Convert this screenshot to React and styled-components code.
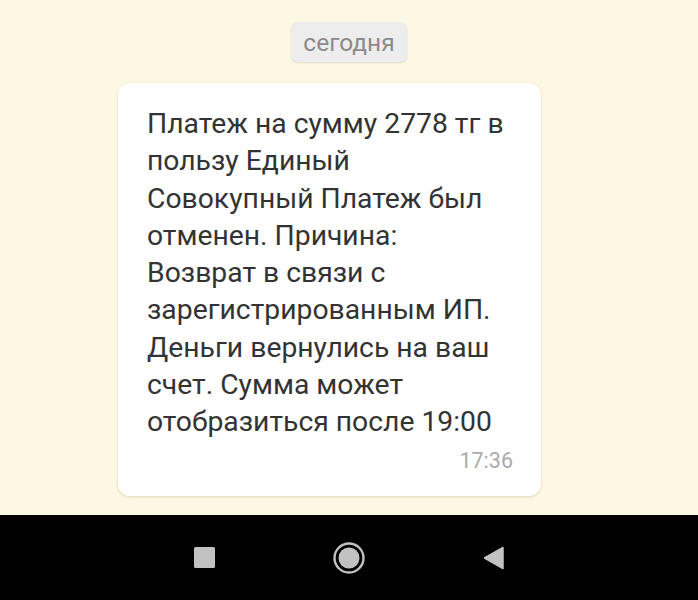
import React from "react";
import styled, { createGlobalStyle } from "styled-components";

const GlobalStyle = createGlobalStyle`
  html, body {
    margin: 0;
    padding: 0;
    background: #fdf8e3;
  }
  body {
    font-family: Roboto, "Noto Sans", sans-serif;
  }
`;

const Screen = styled.div`
  width: 698px;
  height: 600px;
  display: flex;
  flex-direction: column;
  background: #fdf8e3;
  overflow: hidden;
`;

const Chat = styled.main`
  flex: 1;
  display: flex;
  flex-direction: column;
  padding: 22px 0 0 118px;
`;

const DateRow = styled.div`
  display: flex;
  justify-content: center;
  width: 462px;
`;

const DateChip = styled.div`
  width: 116px;
  height: 40px;
  display: flex;
  align-items: center;
  justify-content: center;
  background: #ededed;
  border-radius: 7px;
  box-shadow: 0 1px 2px rgba(0, 0, 0, 0.12);
  color: #8b8b8b;
  font-size: 24.5px;
`;

const Bubble = styled.div`
  margin-top: 21px;
  width: 423px;
  box-sizing: border-box;
  padding: 22px 28px 23px 29px;
  background: #ffffff;
  border-radius: 12px;
  box-shadow: 0 1px 3px rgba(120, 110, 70, 0.25);
`;

const MessageText = styled.p`
  margin: 0;
  color: #333333;
  font-size: 28.3px;
  line-height: 37.3px;
`;

const Time = styled.div`
  margin-top: 8px;
  text-align: right;
  color: #ababab;
  font-size: 21.5px;
  line-height: 24px;
`;

const NavBar = styled.nav`
  height: 85px;
  background: #000000;
  display: flex;
  align-items: center;
  justify-content: space-between;
  padding: 0 193px 0 194px;
  box-sizing: border-box;
`;

const NavButton = styled.div`
  display: flex;
  align-items: center;
  justify-content: center;
  width: ${(p) => p.$size}px;
  height: ${(p) => p.$size}px;
`;

const lines = [
  "Платеж на сумму 2778 тг в",
  "пользу Единый",
  "Совокупный Платеж был",
  "отменен. Причина:",
  "Возврат в связи с",
  "зарегистрированным ИП.",
  "Деньги вернулись на ваш",
  "счет. Сумма может",
  "отобразиться после 19:00",
];

export default function App() {
  return (
    <Screen>
      <GlobalStyle />
      <Chat>
        <DateRow>
          <DateChip>сегодня</DateChip>
        </DateRow>
        <Bubble>
          <MessageText>
            {lines.map((line, i) => (
              <React.Fragment key={i}>
                {line}
                {i < lines.length - 1 && <br />}
              </React.Fragment>
            ))}
          </MessageText>
          <Time>17:36</Time>
        </Bubble>
      </Chat>
      <NavBar>
        <NavButton $size={21}>
          <svg width="21" height="21" viewBox="0 0 21 21">
            <rect x="0" y="0" width="21" height="21" rx="1.5" fill="#c2c2c2" />
          </svg>
        </NavButton>
        <NavButton $size={32}>
          <svg width="32" height="32" viewBox="0 0 32 32">
            <circle cx="16" cy="16" r="14.5" fill="none" stroke="#c2c2c2" strokeWidth="2.4" />
            <circle cx="16" cy="16" r="10.5" fill="#c2c2c2" />
          </svg>
        </NavButton>
        <NavButton $size={22}>
          <svg width="22" height="24" viewBox="0 0 22 24">
            <path d="M20 1.5 L20 22.5 L1.5 12 Z" fill="#c2c2c2" stroke="#c2c2c2" strokeWidth="1.5" strokeLinejoin="round" />
          </svg>
        </NavButton>
      </NavBar>
    </Screen>
  );
}
